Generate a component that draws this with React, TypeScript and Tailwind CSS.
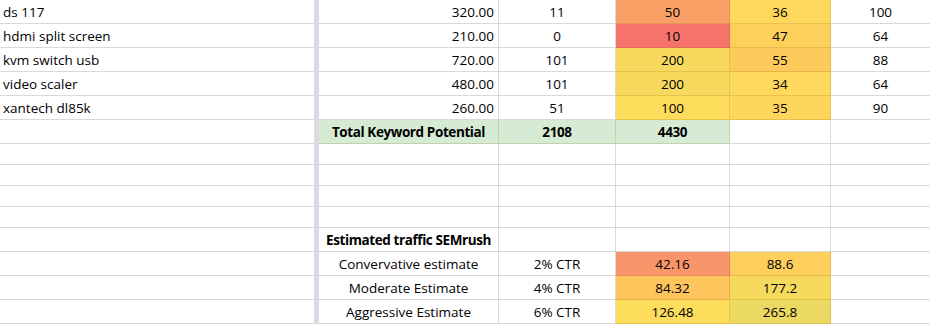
import React from 'react';

type Cell = { text?: string; bold?: boolean; align?: 'left' | 'center' | 'right'; bg?: string };
type Row = { h: string; a?: string; cells: Cell[] };

// columns after the frozen divider: B, C, D, E, F
const colW = ['w-[180px]', 'w-[117px]', 'w-[114px]', 'w-[101px]', 'w-[100px]'];

const rows: Row[] = [
  { h: 'h-[24px]', a: 'ds 117', cells: [{ text: '320.00', align: 'right' }, { text: '11' }, { text: '50', bg: 'bg-[#f8a066]' }, { text: '36', bg: 'bg-[#fed85d]' }, { text: '100' }] },
  { h: 'h-[24px]', a: 'hdmi split screen', cells: [{ text: '210.00', align: 'right' }, { text: '0' }, { text: '10', bg: 'bg-[#f5736c]' }, { text: '47', bg: 'bg-[#fdd05c]' }, { text: '64' }] },
  { h: 'h-[24px]', a: 'kvm switch usb', cells: [{ text: '720.00', align: 'right' }, { text: '101' }, { text: '200', bg: 'bg-[#f8d95e]' }, { text: '55', bg: 'bg-[#fdca5b]' }, { text: '88' }] },
  { h: 'h-[24px]', a: 'video scaler', cells: [{ text: '480.00', align: 'right' }, { text: '101' }, { text: '200', bg: 'bg-[#f8d95e]' }, { text: '34', bg: 'bg-[#fed95d]' }, { text: '64' }] },
  { h: 'h-[24px]', a: 'xantech dl85k', cells: [{ text: '260.00', align: 'right' }, { text: '51' }, { text: '100', bg: 'bg-[#fddc5b]' }, { text: '35', bg: 'bg-[#fed65c]' }, { text: '90' }] },
  { h: 'h-[24px]', cells: [{ text: 'Total Keyword Potential', bold: true, bg: 'bg-[#d5ebd3]' }, { text: '2108', bold: true, bg: 'bg-[#d5ebd3]' }, { text: '4430', bold: true, bg: 'bg-[#d5ebd3]' }, {}, {}] },
  { h: 'h-[21px]', cells: [{}, {}, {}, {}, {}] },
  { h: 'h-[21px]', cells: [{}, {}, {}, {}, {}] },
  { h: 'h-[21px]', cells: [{}, {}, {}, {}, {}] },
  { h: 'h-[21px]', cells: [{}, {}, {}, {}, {}] },
  { h: 'h-[24px]', cells: [{ text: 'Estimated traffic SEMrush', bold: true }, {}, {}, {}, {}] },
  { h: 'h-[24px]', cells: [{ text: 'Convervative estimate' }, { text: '2% CTR' }, { text: '42.16', bg: 'bg-[#f9956a]' }, { text: '88.6', bg: 'bg-[#fecf5d]' }, {}] },
  { h: 'h-[24px]', cells: [{ text: 'Moderate Estimate' }, { text: '4% CTR' }, { text: '84.32', bg: 'bg-[#fec55d]' }, { text: '177.2', bg: 'bg-[#f6da5e]' }, {}] },
  { h: 'h-[24px]', cells: [{ text: 'Aggressive Estimate' }, { text: '6% CTR' }, { text: '126.48', bg: 'bg-[#fedd5c]' }, { text: '265.8', bg: 'bg-[#ebd962]' }, {}] },
];

export default function App() {
  return (
    <div
      className="w-[930px] h-[324px] overflow-hidden bg-white text-[13.5px] leading-[18px] text-black"
      style={{ fontFamily: '"Open Sans", "Noto Sans", sans-serif' }}
    >
      {rows.map((row, r) => (
        <div key={r} className={`flex ${row.h}`}>
          {/* frozen column A */}
          <div className="w-[314px] shrink-0 flex items-center pl-[3px] border-b border-[#d9d9d9]">
            {row.a}
          </div>
          {/* freeze divider */}
          <div className="w-[5px] shrink-0 bg-[#d9dbe4]" />
          {row.cells.map((c, i) => {
            const just = c.align === 'right' ? 'justify-end pr-[4px]' : 'justify-center';
            const borders = c.bg
              ? 'border-b border-r border-[rgba(140,90,0,0.18)]'
              : 'border-b border-r border-[#d9d9d9]';
            return (
              <div
                key={i}
                className={`${colW[i]} shrink-0 flex items-center whitespace-nowrap ${just} ${borders} ${c.bg ?? ''} ${
                  c.bold ? 'font-bold tracking-[-0.4px]' : ''
                }`}
              >
                {c.text}
              </div>
            );
          })}
        </div>
      ))}
    </div>
  );
}
